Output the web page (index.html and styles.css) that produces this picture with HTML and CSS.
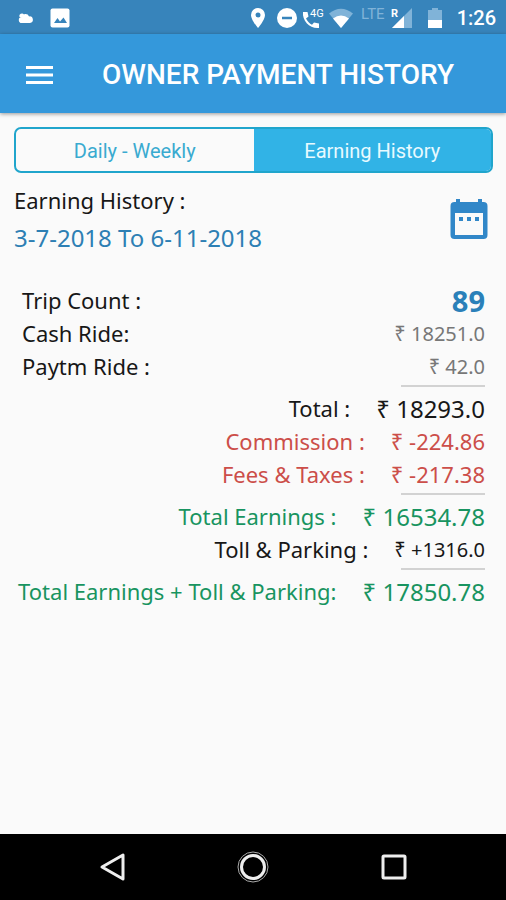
FILE: index.html
```html
<!DOCTYPE html>
<html lang="en">
<head>
<meta charset="utf-8">
<meta name="viewport" content="width=device-width, initial-scale=1">
<title>Owner Payment History</title>
<link rel="stylesheet" href="styles.css">
</head>
<body>
<div class="status">
  <svg class="cloud" width="16" height="12" viewBox="0 0 16 12" fill="#fff"><path d="M4 11a3 3 0 0 1-.4-6 4 4 0 0 1 7.500-.6A3.300 3.300 0 0 1 12 11z"/><path d="M1.500 5A2.600 2.600 0 0 1 6 2.500L4 5z"/></svg>
  <svg width="20" height="20" viewBox="0 0 20 20"><rect x=".5" y=".5" width="19" height="19" rx="2" fill="#fff"/><path d="M4 15l3.500-5 2.500 3.500 3.500-4L17 15z" fill="#3784bb"/></svg>
  <div class="system">
    <svg width="16" height="20" viewBox="0 0 16 20"><path fill="#fff" fill-rule="evenodd" d="M8 0a7 7 0 0 0-7 7c0 5 7 13 7 13s7-8 7-13a7 7 0 0 0-7-7zm0 4.500a2.500 2.500 0 1 1 0 5 2.500 2.500 0 0 1 0-5z"/></svg>
    <svg class="dnd" width="20" height="20" viewBox="0 0 20 20"><circle cx="10" cy="10" r="10" fill="#fff"/><path d="M5 10h10" stroke="#3784bb" stroke-width="2.500"/></svg>
    <svg class="call" width="22" height="22" viewBox="0 0 22 22"><path fill="#fff" d="M1 5h4.500l1 4.500-2.500 2c1.500 3 3.500 5 6 6.200l2-2.200 5 1v4.500C8 22 0 14 1 5z"/><text x="8" y="10" font-size="11" class="net">4G</text></svg>
    <svg class="wifi" width="24" height="20" viewBox="0 0 24 20"><path d="M0 5.500Q12-4 24 5.500L12 20z" fill="#80b3d8"/><path d="M4 10.500q8-6 16 0L12 20z" fill="#fff"/></svg>
    <span class="lte">LTE</span>
    <svg class="signal" width="22" height="22" viewBox="0 0 22 22"><path d="M21 1v20H1z" fill="#80b3d8"/><path d="M13 9v12H1z" fill="#fff"/><text x="0" y="10" font-size="11" class="roam">R</text></svg>
    <svg class="battery" width="14" height="20" viewBox="0 0 14 20"><path d="M4 0h6v2h4v18H0V2h4z" fill="#80b3d8"/><path d="M0 12h14v8H0z" fill="#fff"/></svg>
    <time>1:26</time>
  </div>
</div>
<header class="appbar">
  <button class="menu" type="button" aria-label="Menu"><svg width="28" height="20" viewBox="0 0 28 20" stroke="#fff" stroke-width="3"><path d="M0 2.500h27M0 10h27M0 17.500h27"/></svg></button>
  <h1>OWNER PAYMENT HISTORY</h1>
</header>
<main>
  <div class="tabs">
    <button type="button">Daily - Weekly</button>
    <button type="button" class="active">Earning History</button>
  </div>
  <section class="period">
    <div>
      <h2>Earning History :</h2>
      <p class="range">3-7-2018 To 6-11-2018</p>
    </div>
    <button type="button" class="calendar" aria-label="Choose dates"><svg width="38" height="42" viewBox="0 0 38 42" fill="#3187c8"><path fill-rule="evenodd" d="M6 1h4v3h18V1h4v3h1.500a4 4 0 0 1 4 4v29a4 4 0 0 1-4 4h-29a4 4 0 0 1-4-4V8a4 4 0 0 1 4-4H6zM5 15v22h28V15z"/><path d="M9 19h4v4H9zM17 19h4v4h-4zM25 19h4v4h-4z"/></svg></button>
  </section>
  <dl class="summary">
    <div class="row split"><dt>Trip Count :</dt><dd class="count">89</dd></div>
    <div class="row split"><dt>Cash Ride:</dt><dd class="muted">₹ 18251.0</dd></div>
    <div class="row split ruled"><dt>Paytm Ride :</dt><dd class="muted">₹ 42.0</dd></div>
    <div class="row"><dt>Total :</dt><dd class="big">₹ 18293.0</dd></div>
    <div class="row minus"><dt>Commission :</dt><dd>₹ -224.86</dd></div>
    <div class="row minus ruled"><dt>Fees &amp; Taxes :</dt><dd>₹ -217.38</dd></div>
    <div class="row plus"><dt>Total Earnings :</dt><dd class="big">₹ 16534.78</dd></div>
    <div class="row ruled"><dt>Toll &amp; Parking :</dt><dd>₹ +1316.0</dd></div>
    <div class="row plus"><dt>Total Earnings + Toll &amp; Parking:</dt><dd class="big">₹ 17850.78</dd></div>
  </dl>
</main>
<nav class="navbar">
  <button type="button" aria-label="Back"><svg width="32" height="32" viewBox="0 0 32 32"><path d="M27 4v24L6 16z"/></svg></button>
  <button type="button" aria-label="Home"><svg width="34" height="34" viewBox="0 0 34 34"><circle cx="17" cy="17" r="15" class="halo"/><circle cx="17" cy="17" r="11.500"/></svg></button>
  <button type="button" aria-label="Recent apps"><svg width="32" height="32" viewBox="0 0 32 32"><rect x="5" y="5" width="22" height="22" rx="1"/></svg></button>
</nav>
</body>
</html>
```
FILE: styles.css
```css
* { box-sizing: border-box; }
body {
  margin: 0;
  min-height: 100vh;
  display: flex;
  flex-direction: column;
  background: #fafafa;
  color: #171717;
  font-family: "Noto Sans", sans-serif;
}
h1, h2, p, dl, dd { margin: 0; }
button { border: 0; padding: 0; background: none; font: inherit; color: inherit; }
svg { display: block; flex: none; }

.status {
  height: 34px;
  padding: 1px 10px 0 18px;
  display: flex;
  align-items: center;
  gap: 16px;
  background: #3784bb;
  color: #fff;
  font-family: Roboto, sans-serif;
}
.system { margin-left: auto; display: flex; align-items: center; }
.dnd { margin-left: 11px; }
.call { margin-left: 5px; }
.wifi { margin-left: 5px; }
.lte { margin: 0 6px 8px 8px; font-size: 15px; line-height: 16px; color: #80b3d8; }
.battery { margin: 0 15px; }
.net { fill: #fff; }
.roam { fill: #fff; font-weight: 700; }
time { font-size: 20px; font-weight: 500; }

.appbar {
  height: 79px;
  padding: 2px 26px 0;
  display: flex;
  align-items: center;
  gap: 48px;
  background: #3498db;
  color: #fff;
  box-shadow: 0 1px 4px rgba(0, 0, 0, .4);
}
h1 { font: 500 28px/36px Roboto, sans-serif; white-space: nowrap; }

main { flex: 1; padding: 14px 13px 20px 14px; }
.tabs {
  height: 46px;
  display: flex;
  border: 2px solid #20a5cc;
  border-radius: 7px;
  overflow: hidden;
  font: 20px/24px Roboto, sans-serif;
}
.tabs button { flex: 1; padding-top: 2px; color: #39aad0; }
.tabs .active { background: #31b3e6; color: #e8faff; }

.period { display: flex; justify-content: space-between; align-items: center; padding: 8px 5px 0 0; }
h2 { font-size: 22px; font-weight: 400; line-height: 38px; }
.range { font-size: 24px; line-height: 38px; color: #2d7fb4; }

.summary { margin-top: 27px; padding: 0 8px; }
.row {
  display: flex;
  justify-content: flex-end;
  align-items: center;
  gap: 26px;
  font-size: 22px;
  line-height: 33px;
  white-space: nowrap;
}
.row dd { font-size: 20px; }
.split { justify-content: space-between; }
.ruled { position: relative; margin-bottom: 9px; }
.ruled::after {
  content: "";
  position: absolute;
  right: 0;
  bottom: -4px;
  width: 84px;
  height: 2px;
  background: #d2d2d2;
}
.row .big { font-size: 24px; }
.row .count { font-size: 29px; font-weight: 700; color: #2a80b9; }
.muted { color: #777; }
.minus { color: #cc4e49; }
.minus dd { font-size: 22px; }
.plus { color: #189460; }

.navbar {
  height: 66px;
  padding: 0 42px;
  display: flex;
  align-items: center;
  justify-content: space-around;
  background: #000;
}
.navbar svg { fill: none; stroke: #eee; stroke-width: 3; stroke-linejoin: round; }
.navbar .halo { stroke: #aaa; stroke-width: 1; }
```
